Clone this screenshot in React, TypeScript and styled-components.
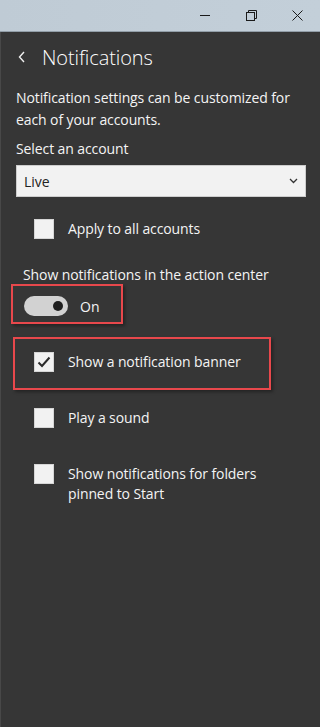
import React, { useState } from "react";
import styled, { createGlobalStyle } from "styled-components";

const Global = createGlobalStyle`
  html, body {
    margin: 0;
    padding: 0;
    background: #363636;
  }
  * {
    box-sizing: border-box;
  }
`;

const Window = styled.div`
  width: 320px;
  height: 727px;
  display: flex;
  flex-direction: column;
  background: #363636;
  font-family: "Open Sans", "Noto Sans", sans-serif;
  color: #f4f4f4;
  overflow: hidden;
`;

const TitleBar = styled.div`
  height: 32px;
  flex-shrink: 0;
  display: flex;
  justify-content: flex-end;
  align-items: center;
  background: linear-gradient(90deg, #bfcbd5 0%, #c3cfd9 100%);
  border-bottom: 1px solid #929ea8;
`;

const WinButton = styled.div`
  width: 46px;
  height: 31px;
  display: flex;
  align-items: center;
  justify-content: center;
`;

const Body = styled.div`
  flex: 1;
  border-left: 1px solid #484848;
  padding-left: 15px;
  display: flex;
  flex-direction: column;
`;

const Header = styled.div`
  height: 50px;
  display: flex;
  align-items: center;
  gap: 16px;
  padding-left: 2px;
`;

const Title = styled.div`
  font-size: 20px;
  font-weight: 300;
  color: #ffffff;
  letter-spacing: -0.1px;
`;

const Paragraph = styled.div<{ $top?: number }>`
  font-size: 14px;
  line-height: 22px;
  margin-top: ${({ $top }) => $top ?? 0}px;
  padding-right: 12px;
  letter-spacing: -0.1px;
`;

const SelectBox = styled.div`
  margin-top: 5px;
  width: 290px;
  height: 32px;
  background: #f2f2f2;
  border: 1px solid #cdcdcd;
  display: flex;
  align-items: center;
  justify-content: space-between;
  padding: 0 7px;
  color: #222;
  font-size: 14px;
`;

const CheckRow = styled.div<{ $top?: number }>`
  display: flex;
  align-items: flex-start;
  gap: 14px;
  margin-top: ${({ $top }) => $top ?? 0}px;
  padding-left: 18px;
  cursor: pointer;
`;

const Box = styled.div`
  width: 20px;
  height: 20px;
  flex-shrink: 0;
  background: #f2f2f2;
  border: 1px solid #d6d6d6;
  display: flex;
  align-items: center;
  justify-content: center;
`;

const CheckLabel = styled.div`
  font-size: 14px;
  line-height: 20px;
  letter-spacing: -0.1px;
`;

const SectionLabel = styled.div`
  margin-top: 27px;
  padding-left: 7px;
  font-size: 14px;
  line-height: 18px;
  letter-spacing: -0.1px;
`;

const Highlight = styled.div<{ $w: number; $pad: string; $left: number; $top: number }>`
  width: ${({ $w }) => $w}px;
  margin-left: ${({ $left }) => $left}px;
  margin-top: ${({ $top }) => $top}px;
  border: 2px solid #e8484c;
  padding: ${({ $pad }) => $pad};
  box-shadow: 2px 2px 3px rgba(0, 0, 0, 0.35);
`;

const ToggleRow = styled.div`
  display: flex;
  align-items: center;
  gap: 12px;
`;

const Track = styled.div<{ $on: boolean }>`
  width: 44px;
  height: 20px;
  border-radius: 10px;
  background: #d2d2d2;
  display: flex;
  align-items: center;
  justify-content: ${({ $on }) => ($on ? "flex-end" : "flex-start")};
  padding: 0 5px;
  cursor: pointer;
`;

const Knob = styled.div`
  width: 10px;
  height: 10px;
  border-radius: 50%;
  background: #1f1f1f;
`;

const ToggleText = styled.div`
  font-size: 14px;
`;

const Check = () => (
  <svg width="14" height="12" viewBox="0 0 14 12">
    <path d="M1.5 6.5 L5 10 L12.5 1.5" fill="none" stroke="#2b2b2b" strokeWidth="2" />
  </svg>
);

const CheckItem = ({
  label,
  checked,
  onToggle,
  top,
}: {
  label: React.ReactNode;
  checked: boolean;
  onToggle: () => void;
  top?: number;
}) => (
  <CheckRow $top={top} onClick={onToggle}>
    <Box>{checked && <Check />}</Box>
    <CheckLabel>{label}</CheckLabel>
  </CheckRow>
);

const App = () => {
  const [all, setAll] = useState(false);
  const [on, setOn] = useState(true);
  const [banner, setBanner] = useState(true);
  const [sound, setSound] = useState(false);
  const [folders, setFolders] = useState(false);

  return (
    <Window>
      <Global />
      <TitleBar>
        <WinButton>
          <svg width="11" height="11" viewBox="0 0 11 11">
            <path d="M0 5.5 H10" stroke="#1a1a1a" strokeWidth="1" />
          </svg>
        </WinButton>
        <WinButton>
          <svg width="11" height="11" viewBox="0 0 11 11">
            <rect x="0.5" y="2.5" width="8" height="8" fill="none" stroke="#1a1a1a" />
            <path d="M2.5 2.5 V0.5 H10.5 V8.5 H8.5" fill="none" stroke="#1a1a1a" />
          </svg>
        </WinButton>
        <WinButton>
          <svg width="11" height="11" viewBox="0 0 11 11">
            <path d="M0.5 0.5 L10.5 10.5 M10.5 0.5 L0.5 10.5" stroke="#1a1a1a" strokeWidth="1" />
          </svg>
        </WinButton>
      </TitleBar>
      <Body>
        <Header>
          <svg width="8" height="12" viewBox="0 0 8 12">
            <path d="M6 1 L1.5 6 L6 11" fill="none" stroke="#f0f0f0" strokeWidth="1.4" />
          </svg>
          <Title>Notifications</Title>
        </Header>
        <Paragraph $top={5}>
          Notification settings can be customized for each of your accounts.
        </Paragraph>
        <Paragraph $top={7}>Select an account</Paragraph>
        <SelectBox>
          <span>Live</span>
          <svg width="9" height="6" viewBox="0 0 9 6">
            <path d="M1 1 L4.5 4.5 L8 1" fill="none" stroke="#333" strokeWidth="1.3" />
          </svg>
        </SelectBox>
        <CheckItem label="Apply to all accounts" checked={all} onToggle={() => setAll(!all)} top={22} />
        <SectionLabel>Show notifications in the action center</SectionLabel>
        <Highlight $w={112} $left={-5} $top={0} $pad="10px 0 6px 11px">
          <ToggleRow>
            <Track $on={on} onClick={() => setOn(!on)}>
              <Knob />
            </Track>
            <ToggleText>{on ? "On" : "Off"}</ToggleText>
          </ToggleRow>
        </Highlight>
        <Highlight $w={258} $left={-3} $top={13} $pad="13px 0 16px 1px">
          <CheckItem label="Show a notification banner" checked={banner} onToggle={() => setBanner(!banner)} />
        </Highlight>
        <CheckItem label="Play a sound" checked={sound} onToggle={() => setSound(!sound)} top={18} />
        <CheckItem
          label={
            <>
              Show notifications for folders
              <br />
              pinned to Start
            </>
          }
          checked={folders}
          onToggle={() => setFolders(!folders)}
          top={36}
        />
      </Body>
    </Window>
  );
};

export default App;
